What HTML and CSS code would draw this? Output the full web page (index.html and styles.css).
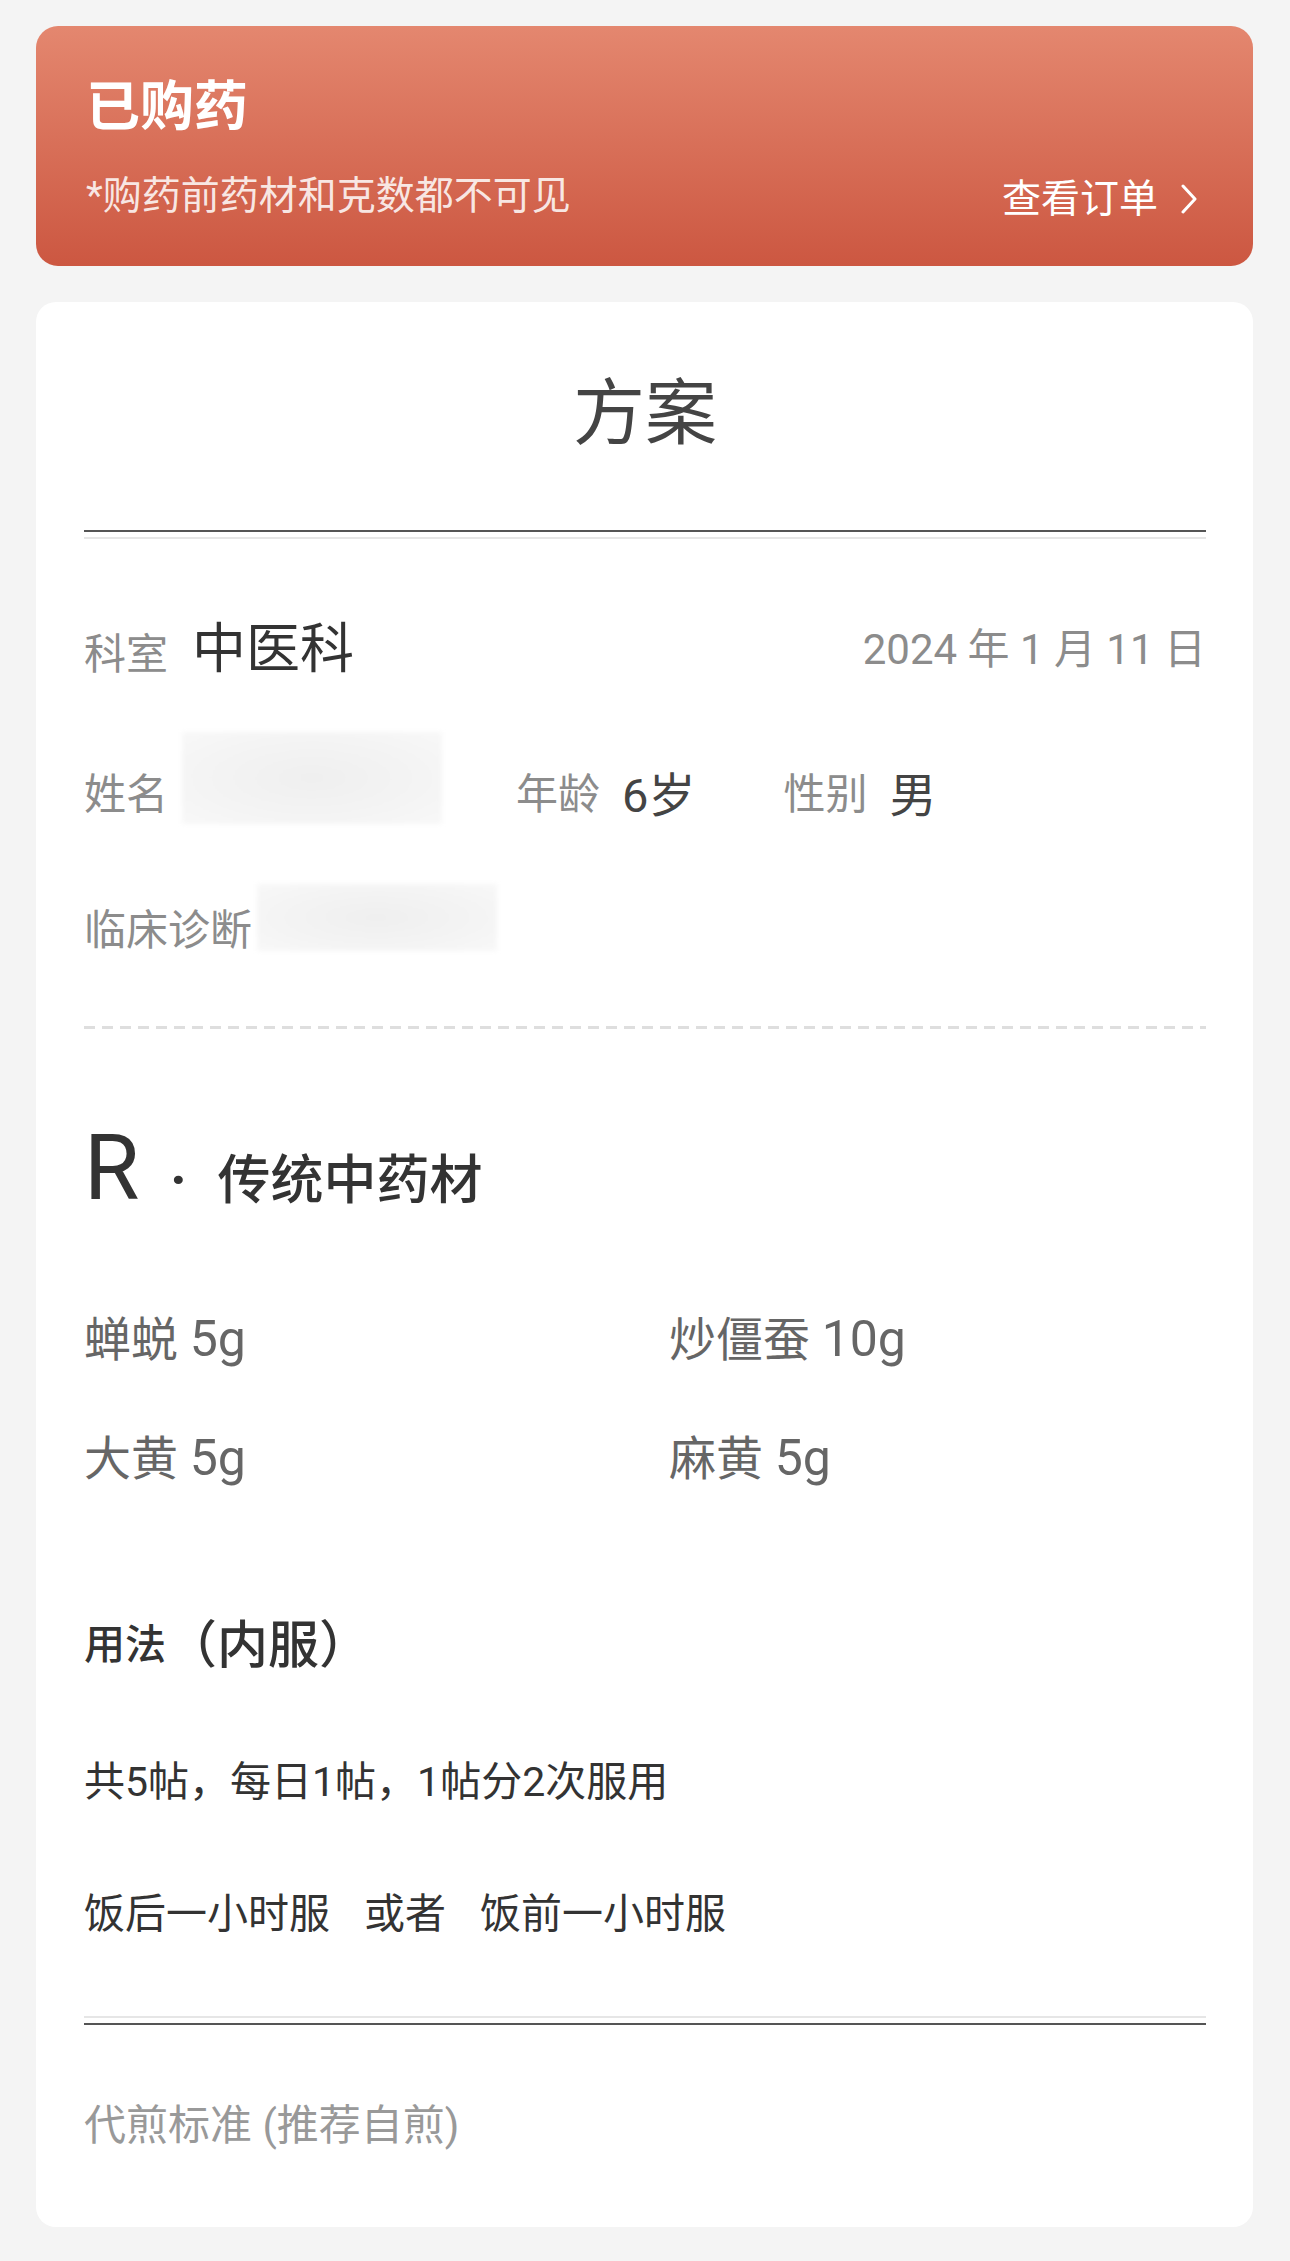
FILE: index.html
```html
<!DOCTYPE html>
<html>
<head>
  <meta charset="UTF-8">
  <title>方案</title>
  <link rel="stylesheet" href="styles.css">
</head>

<body>
  <div class="banner">
    <div class="banner-title">已购药</div>
    <div class="banner-row">
      <div class="banner-tip">*购药前药材和克数都不可见</div>
      <div class="banner-link">查看订单
        <svg class="chev" width="18" height="30" viewBox="0 0 18 30"><path d="M3 2 L15 15 L3 28" fill="none" stroke="#fff" stroke-width="3" stroke-linecap="round" stroke-linejoin="round"/></svg>
      </div>
    </div>
  </div>

  <div class="card">
    <div class="card-title">方案</div>
    <div class="double-rule"></div>

    <div class="info-row row1">
      <span class="label">科室</span><span class="dept">中医科</span>
      <span class="date">2024 年 1 月 11 日</span>
    </div>
    <div class="info-row row2">
      <span class="label">姓名</span><span class="mask mask-name"></span>
      <span class="label gap-l">年龄</span><span class="value">6岁</span>
      <span class="label gap-l2">性别</span><span class="value">男</span>
    </div>
    <div class="info-row row3">
      <span class="label">临床诊断</span><span class="mask mask-diag"></span>
    </div>

    <div class="dash"></div>

    <div class="rx-head">
      <span class="rx-r">R</span><span class="rx-dot">·</span><span class="rx-name">传统中药材</span>
    </div>

    <div class="herbs">
      <div class="herb">蝉蜕 <span class="num">5g</span></div>
      <div class="herb">炒僵蚕 <span class="num">10g</span></div>
      <div class="herb">大黄 <span class="num">5g</span></div>
      <div class="herb">麻黄 <span class="num">5g</span></div>
    </div>

    <div class="usage-title"><span class="u-small">用法</span><span class="u-big">（内服）</span></div>
    <div class="usage-line first">共5帖，每日1帖，1帖分2次服用</div>
    <div class="usage-line"><span class="sp">饭后一小时服</span><span class="sp">或者</span><span>饭前一小时服</span></div>

    <div class="double-rule rev"></div>

    <div class="decoct">代煎标准 (推荐自煎)</div>
  </div>
</body>
</html>
```

FILE: styles.css
```css
/* page */
body {
  margin: 0;
  padding: 26px 37px 34px 36px;
  background: #f4f4f4;
  font-family: Roboto, "Noto Sans CJK SC", sans-serif;
  color: #333;
}

/* top banner */
.banner {
  height: 240px;
  box-sizing: border-box;
  padding: 55px 55px 0 50px;
  border-radius: 22px;
  background: linear-gradient(#e4876f, #cc5741);
  color: #fff;
}
.banner-title {
  font-size: 54px;
  line-height: 54px;
  font-weight: 700;
}
.banner-row {
  display: flex;
  justify-content: space-between;
  align-items: flex-end;
  margin-top: 41px;
}
.banner-tip {
  font-size: 39px;
  line-height: 40px;
  color: rgba(255, 255, 255, 0.86);
}
.banner-link {
  display: flex;
  align-items: center;
  font-size: 39px;
  line-height: 40px;
  margin-bottom: -3px;
}
.chev { margin-left: 22px; }

/* prescription card */
.card {
  margin-top: 36px;
  padding: 76px 47px 71px 48px;
  background: #fff;
  border-radius: 20px;
}
.card-title {
  text-align: center;
  font-size: 72px;
  line-height: 72px;
  color: #444;
}
.double-rule {
  margin-top: 80px;
  height: 5px;
  border-top: 2px solid #555;
  border-bottom: 2px solid #e6e6e6;
}
.double-rule.rev {
  margin-top: 72px;
  border-top: 2px solid #e6e6e6;
  border-bottom: 2px solid #555;
}

.info-row {
  display: flex;
  align-items: center;
  height: 100px;
}
.row1 { margin-top: 61px; }
.row2 { margin-top: 45px; }
.row3 { margin-top: 36px; }

.label {
  font-size: 42px;
  line-height: 42px;
  color: #8c8c8c;
}
.row1 .label { margin-top: 10px; }
.dept {
  margin-left: 24px;
  font-size: 54px;
  line-height: 54px;
  color: #333;
}
.date {
  margin-left: auto;
  font-size: 42px;
  line-height: 42px;
  color: #8c8c8c;
}
.value {
  margin-left: 22px;
  font-size: 47px;
  line-height: 47px;
  color: #444;
}
.gap-l { margin-left: 74px; }
.gap-l2 { margin-left: 88px; }

/* blurred private fields */
.mask {
  display: block;
  background: radial-gradient(ellipse at center, #efefef 0%, #f4f4f4 60%, #f8f8f8 100%);
  filter: blur(2px);
}
.mask-name {
  width: 260px;
  height: 92px;
  margin-left: 14px;
  margin-bottom: 34px;
}
.mask-diag {
  width: 240px;
  height: 67px;
  margin-left: 5px;
  margin-bottom: 28px;
}

.dash {
  margin-top: 45px;
  height: 3px;
  background: repeating-linear-gradient(to right, #dedede 0 11px, transparent 11px 18px);
}

/* Rx heading */
.rx-head {
  display: flex;
  align-items: baseline;
  margin-top: 96px;
  height: 88px;
}
.rx-r {
  font-size: 90px;
  line-height: 88px;
  color: #333;
}
.rx-dot {
  display: inline-block;
  width: 78px;
  text-align: center;
  font-size: 56px;
  font-weight: 700;
  color: #333;
}
.rx-name {
  font-size: 53px;
  line-height: 53px;
  font-weight: 500;
  color: #333;
}

.herbs {
  display: grid;
  grid-template-columns: 585px 1fr;
  row-gap: 58px;
  margin-top: 96px;
}
.herb {
  font-size: 47px;
  line-height: 60px;
  color: #666;
}
.num { font-size: 50px; }

/* usage */
.usage-title {
  margin-top: 122px;
  height: 60px;
  display: flex;
  align-items: center;
  color: #333;
}
.u-small { font-size: 41px; font-weight: 500; }
.u-big { font-size: 51px; font-weight: 500; }
.usage-line {
  margin-top: 72px;
  font-size: 41px;
  line-height: 60px;
  color: #333;
}
.usage-line.first { margin-top: 81px; }
.sp { margin-right: 34px; }

.decoct {
  margin-top: 71px;
  font-size: 42px;
  line-height: 60px;
  color: #999;
}
```
